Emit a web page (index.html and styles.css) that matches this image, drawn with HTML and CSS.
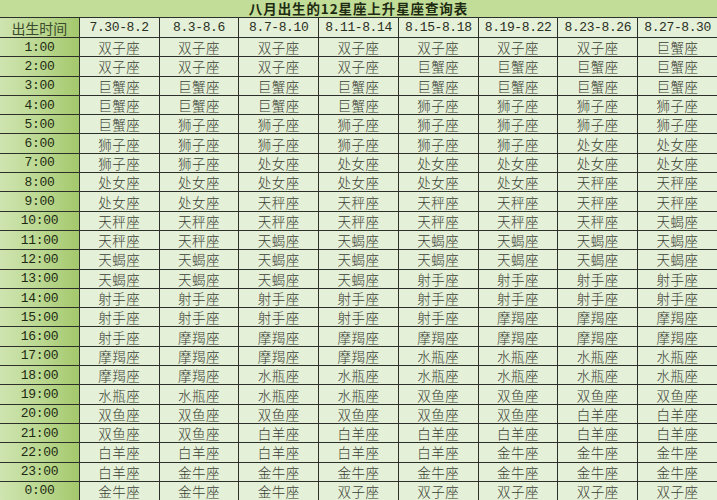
FILE: index.html
```html
<!DOCTYPE html>
<html lang="zh">
<head>
<meta charset="utf-8">
<title>八月出生的12星座上升星座查询表</title>
<link rel="stylesheet" href="styles.css">
</head>
<body>
<div class="sheet">
  <div class="title"><span class="title-text">八月出生的12星座上升星座查询表</span></div>

  <div class="h zh">出生时间</div><div class="d">7.30-8.2</div><div class="d">8.3-8.6</div><div class="d">8.7-8.10</div><div class="d">8.11-8.14</div><div class="d">8.15-8.18</div><div class="d">8.19-8.22</div><div class="d">8.23-8.26</div><div class="d">8.27-8.30</div>

  <div class="h">1:00</div><div class="c">双子座</div><div class="c">双子座</div><div class="c">双子座</div><div class="c">双子座</div><div class="c">双子座</div><div class="c">双子座</div><div class="c">双子座</div><div class="c">巨蟹座</div>
  <div class="h">2:00</div><div class="c">双子座</div><div class="c">双子座</div><div class="c">双子座</div><div class="c">双子座</div><div class="c">巨蟹座</div><div class="c">巨蟹座</div><div class="c">巨蟹座</div><div class="c">巨蟹座</div>
  <div class="h">3:00</div><div class="c">巨蟹座</div><div class="c">巨蟹座</div><div class="c">巨蟹座</div><div class="c">巨蟹座</div><div class="c">巨蟹座</div><div class="c">巨蟹座</div><div class="c">巨蟹座</div><div class="c">巨蟹座</div>
  <div class="h">4:00</div><div class="c">巨蟹座</div><div class="c">巨蟹座</div><div class="c">巨蟹座</div><div class="c">巨蟹座</div><div class="c">狮子座</div><div class="c">狮子座</div><div class="c">狮子座</div><div class="c">狮子座</div>
  <div class="h">5:00</div><div class="c">巨蟹座</div><div class="c">狮子座</div><div class="c">狮子座</div><div class="c">狮子座</div><div class="c">狮子座</div><div class="c">狮子座</div><div class="c">狮子座</div><div class="c">狮子座</div>
  <div class="h">6:00</div><div class="c">狮子座</div><div class="c">狮子座</div><div class="c">狮子座</div><div class="c">狮子座</div><div class="c">狮子座</div><div class="c">狮子座</div><div class="c">处女座</div><div class="c">处女座</div>
  <div class="h">7:00</div><div class="c">狮子座</div><div class="c">狮子座</div><div class="c">处女座</div><div class="c">处女座</div><div class="c">处女座</div><div class="c">处女座</div><div class="c">处女座</div><div class="c">处女座</div>
  <div class="h">8:00</div><div class="c">处女座</div><div class="c">处女座</div><div class="c">处女座</div><div class="c">处女座</div><div class="c">处女座</div><div class="c">处女座</div><div class="c">天秤座</div><div class="c">天秤座</div>
  <div class="h">9:00</div><div class="c">处女座</div><div class="c">处女座</div><div class="c">天秤座</div><div class="c">天秤座</div><div class="c">天秤座</div><div class="c">天秤座</div><div class="c">天秤座</div><div class="c">天秤座</div>
  <div class="h">10:00</div><div class="c">天秤座</div><div class="c">天秤座</div><div class="c">天秤座</div><div class="c">天秤座</div><div class="c">天秤座</div><div class="c">天秤座</div><div class="c">天秤座</div><div class="c">天蝎座</div>
  <div class="h">11:00</div><div class="c">天秤座</div><div class="c">天秤座</div><div class="c">天蝎座</div><div class="c">天蝎座</div><div class="c">天蝎座</div><div class="c">天蝎座</div><div class="c">天蝎座</div><div class="c">天蝎座</div>
  <div class="h">12:00</div><div class="c">天蝎座</div><div class="c">天蝎座</div><div class="c">天蝎座</div><div class="c">天蝎座</div><div class="c">天蝎座</div><div class="c">天蝎座</div><div class="c">天蝎座</div><div class="c">天蝎座</div>
  <div class="h">13:00</div><div class="c">天蝎座</div><div class="c">天蝎座</div><div class="c">天蝎座</div><div class="c">天蝎座</div><div class="c">射手座</div><div class="c">射手座</div><div class="c">射手座</div><div class="c">射手座</div>
  <div class="h">14:00</div><div class="c">射手座</div><div class="c">射手座</div><div class="c">射手座</div><div class="c">射手座</div><div class="c">射手座</div><div class="c">射手座</div><div class="c">射手座</div><div class="c">射手座</div>
  <div class="h">15:00</div><div class="c">射手座</div><div class="c">射手座</div><div class="c">射手座</div><div class="c">射手座</div><div class="c">射手座</div><div class="c">摩羯座</div><div class="c">摩羯座</div><div class="c">摩羯座</div>
  <div class="h">16:00</div><div class="c">射手座</div><div class="c">摩羯座</div><div class="c">摩羯座</div><div class="c">摩羯座</div><div class="c">摩羯座</div><div class="c">摩羯座</div><div class="c">摩羯座</div><div class="c">摩羯座</div>
  <div class="h">17:00</div><div class="c">摩羯座</div><div class="c">摩羯座</div><div class="c">摩羯座</div><div class="c">摩羯座</div><div class="c">水瓶座</div><div class="c">水瓶座</div><div class="c">水瓶座</div><div class="c">水瓶座</div>
  <div class="h">18:00</div><div class="c">摩羯座</div><div class="c">摩羯座</div><div class="c">水瓶座</div><div class="c">水瓶座</div><div class="c">水瓶座</div><div class="c">水瓶座</div><div class="c">水瓶座</div><div class="c">水瓶座</div>
  <div class="h">19:00</div><div class="c">水瓶座</div><div class="c">水瓶座</div><div class="c">水瓶座</div><div class="c">水瓶座</div><div class="c">双鱼座</div><div class="c">双鱼座</div><div class="c">双鱼座</div><div class="c">双鱼座</div>
  <div class="h">20:00</div><div class="c">双鱼座</div><div class="c">双鱼座</div><div class="c">双鱼座</div><div class="c">双鱼座</div><div class="c">双鱼座</div><div class="c">双鱼座</div><div class="c">白羊座</div><div class="c">白羊座</div>
  <div class="h">21:00</div><div class="c">双鱼座</div><div class="c">双鱼座</div><div class="c">白羊座</div><div class="c">白羊座</div><div class="c">白羊座</div><div class="c">白羊座</div><div class="c">白羊座</div><div class="c">白羊座</div>
  <div class="h">22:00</div><div class="c">白羊座</div><div class="c">白羊座</div><div class="c">白羊座</div><div class="c">白羊座</div><div class="c">白羊座</div><div class="c">金牛座</div><div class="c">金牛座</div><div class="c">金牛座</div>
  <div class="h">23:00</div><div class="c">白羊座</div><div class="c">金牛座</div><div class="c">金牛座</div><div class="c">金牛座</div><div class="c">金牛座</div><div class="c">金牛座</div><div class="c">金牛座</div><div class="c">金牛座</div>
  <div class="h">0:00</div><div class="c">金牛座</div><div class="c">金牛座</div><div class="c">金牛座</div><div class="c">双子座</div><div class="c">双子座</div><div class="c">双子座</div><div class="c">双子座</div><div class="c">双子座</div>
</div>
</body>
</html>
```

FILE: styles.css
```css
html, body {
  margin: 0;
  padding: 0;
  background: #e3efd5;
  overflow: hidden;
}

.sheet {
  width: 717px;
  height: 500px;
  display: grid;
  grid-template-columns: repeat(9, 1fr);
  grid-template-rows: 17px 19px repeat(24, 18.3px);
  gap: 1px;
  background: #2d2f2a;
  font-family: "Noto Sans CJK SC", "Liberation Serif", serif;
}

.sheet > div {
  display: flex;
  align-items: center;
  justify-content: center;
  overflow: hidden;
  white-space: nowrap;
}

.sheet > .title {
  grid-column: 1 / -1;
  background: #c2dd98;
  overflow: visible;
}

.title-text {
  display: inline-block;
  height: 17px;
  color: #1e2b12;
  font-family: "Noto Sans CJK SC", sans-serif;
  font-weight: 700;
  font-size: 13.5px;
  line-height: 17px;
  letter-spacing: 0.9px;
}

.h {
  background: linear-gradient(to right, #cfe4b0 0%, #b9d78e 55%, #a4c86c 100%);
  color: #1e2a14;
  font-family: "Liberation Mono", monospace;
  font-size: 13px;
  letter-spacing: -0.3px;
}

.h.zh {
  font-family: "Noto Sans CJK SC", sans-serif;
  font-size: 14px;
  letter-spacing: 0;
  color: #3b4a2c;
}

.d {
  background: #e4f0d7;
  color: #2a2f25;
  font-family: "Liberation Mono", monospace;
  font-size: 13px;
  letter-spacing: -0.4px;
}

.c {
  background: #e4f0d7;
  color: #3a3d35;
  font-family: "Noto Sans CJK SC", sans-serif;
  font-weight: 300;
  font-size: 13.5px;
  letter-spacing: 0.5px;
}
```
